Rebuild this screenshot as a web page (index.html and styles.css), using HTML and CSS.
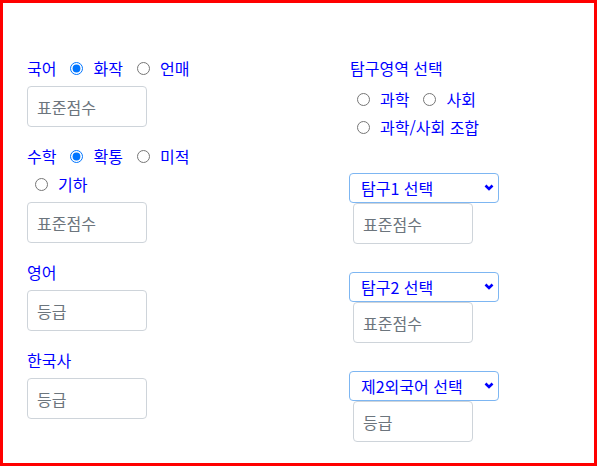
FILE: index.html
```html
<!DOCTYPE html>
<html lang="ko">
<head>
    <meta charset="UTF-8">
    <meta name="viewport" content="width=device-width, initial-scale=1.0">
    <title>성적 입력</title>
    <link rel="stylesheet" href="styles.css">
</head>
<body>
    <div class="frame">
        <div class="col left">
            <div class="field">
                <div class="line">
                    <span>국어</span>
                    <label class="opt"><input type="radio" name="kor" checked> 화작</label>
                    <label class="opt"><input type="radio" name="kor"> 언매</label>
                </div>
                <input class="score" type="text" placeholder="표준점수">
            </div>

            <div class="field">
                <div class="line">
                    <span>수학</span>
                    <label class="opt"><input type="radio" name="math" checked> 확통</label>
                    <label class="opt"><input type="radio" name="math"> 미적</label>
                </div>
                <div class="line">
                    <label class="opt indent"><input type="radio" name="math"> 기하</label>
                </div>
                <input class="score" type="text" placeholder="표준점수">
            </div>

            <div class="field">
                <div class="line"><span>영어</span></div>
                <input class="score" type="text" placeholder="등급">
            </div>

            <div class="field">
                <div class="line"><span>한국사</span></div>
                <input class="score" type="text" placeholder="등급">
            </div>
        </div>

        <div class="col right">
            <div class="line title">탐구영역 선택</div>
            <div class="radios">
                <div class="line">
                    <label class="opt indent"><input type="radio" name="area"> 과학</label>
                    <label class="opt"><input type="radio" name="area"> 사회</label>
                </div>
                <div class="line">
                    <label class="opt indent"><input type="radio" name="area"> 과학/사회 조합</label>
                </div>
            </div>

            <div class="pick first">
                <div class="select-wrap">
                    <select><option>탐구1 선택</option></select>
                    <svg class="chev" width="10" height="7" viewBox="0 0 10 7"><path d="M1.5 1.5 L5 5 L8.5 1.5" fill="none" stroke="#0000ff" stroke-width="2.6"/></svg>
                </div>
                <input class="score sub" type="text" placeholder="표준점수">
            </div>

            <div class="pick">
                <div class="select-wrap">
                    <select><option>탐구2 선택</option></select>
                    <svg class="chev" width="10" height="7" viewBox="0 0 10 7"><path d="M1.5 1.5 L5 5 L8.5 1.5" fill="none" stroke="#0000ff" stroke-width="2.6"/></svg>
                </div>
                <input class="score sub" type="text" placeholder="표준점수">
            </div>

            <div class="pick">
                <div class="select-wrap">
                    <select><option>제2외국어 선택</option></select>
                    <svg class="chev" width="10" height="7" viewBox="0 0 10 7"><path d="M1.5 1.5 L5 5 L8.5 1.5" fill="none" stroke="#0000ff" stroke-width="2.6"/></svg>
                </div>
                <input class="score sub" type="text" placeholder="등급">
            </div>
        </div>
    </div>
</body>
</html>
```

FILE: styles.css
```css
body {
    margin: 0;
    background: white;
    font-family: "Noto Sans CJK KR", "Noto Sans", sans-serif;
    font-size: 16px;
    color: #0000ff;
}
.frame {
    width: 567px;
    height: 408px;
    border: 3px solid red;
    padding: 52px 0 0 24px;
    display: grid;
    grid-template-columns: 322px 150px;
    align-items: start;
}
.line {
    height: 28px;
    box-sizing: border-box;
    padding-bottom: 2px;
    display: flex;
    align-items: center;
    white-space: nowrap;
}
.opt {
    display: flex;
    align-items: center;
    margin-left: 14px;
}
.opt input {
    width: 13px;
    height: 13px;
    margin: 0 10px 0 0;
    accent-color: #0075ff;
}
.opt.indent {
    margin-left: 8px;
}
.field {
    margin-bottom: 16px;
}
.score {
    display: block;
    width: 120px;
    height: 41px;
    margin-top: 3px;
    box-sizing: border-box;
    border: 1px solid #ced4da;
    border-radius: 4px;
    padding: 0 9px;
    font-family: inherit;
    font-size: 16px;
    color: #212529;
}
.score::placeholder {
    color: #6c757d;
}
.title {
    padding-left: 1px;
}
.radios {
    margin-top: 3px;
}
.pick {
    margin-top: 28px;
}
.pick.first {
    margin-top: 31px;
}
.select-wrap {
    position: relative;
    width: 150px;
}
select {
    appearance: none;
    display: block;
    width: 150px;
    height: 30px;
    box-sizing: border-box;
    border: 1px solid #7db6f2;
    border-radius: 4px;
    padding: 0 0 0 11px;
    background: white;
    font-family: inherit;
    font-size: 16px;
    color: #0000ff;
}
.chev {
    position: absolute;
    right: 5px;
    top: 11px;
}
.score.sub {
    margin: 0 0 0 4px;
}
```
